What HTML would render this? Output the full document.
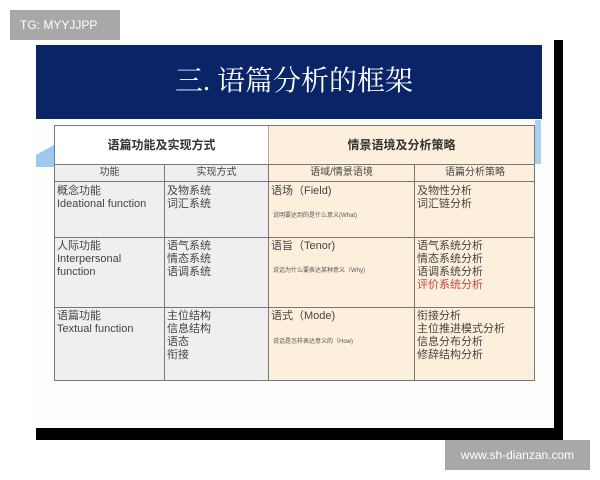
<!DOCTYPE html>
<html><head><meta charset="utf-8"><style>
*{margin:0;padding:0;box-sizing:border-box}
body{width:600px;height:480px;background:#fff;position:relative;overflow:hidden;font-family:"Liberation Sans","Noto Sans CJK SC",sans-serif}
.a{position:absolute}
.c{position:absolute;font-size:11px;line-height:13px;color:#444;padding:2px 2px}
.s{font-size:6px;line-height:8px;color:#555}
</style></head><body>
<div class="a" style="left:10px;top:10px;width:110px;height:30px;background:#a8a8a8;color:#fff;font-size:12px;line-height:30px;padding-left:10px">TG: MYYJJPP</div>
<div class="a" style="left:36px;top:40px;width:518px;height:388px;background:#fdfdfc"></div>
<div class="a" style="left:554px;top:40px;width:9px;height:400px;background:#000"></div>
<div class="a" style="left:36px;top:428px;width:527px;height:12px;background:#000"></div>
<div class="a" style="left:36px;top:45px;width:506px;height:74px;background:#0a2468"></div>
<div class="a" style="left:36px;top:45px;width:506px;height:74px;color:#fff;font-family:'Liberation Serif','Noto Serif CJK SC',serif;font-size:28px;text-align:center;line-height:74px;padding-left:10px">三. 语篇分析的框架</div>
<div class="a" style="left:535px;top:120px;width:6px;height:44px;background:#a9d2f0"></div>
<div class="a" style="left:36px;top:145px;width:18px;height:22px;background:#9cc9ec;clip-path:polygon(0 45%,100% 0,100% 100%,0 100%)"></div>
<div class="a" style="left:54px;top:125px;width:481px;height:256px;border:1px solid #777">
</div>
<div class="a" style="left:55px;top:126px;width:213px;height:38px;background:#fff;font-size:12px;font-weight:bold;color:#333;text-align:center;line-height:38px">语篇功能及实现方式</div>
<div class="a" style="left:268px;top:126px;width:266px;height:38px;background:#fcefdc;font-size:12px;font-weight:bold;color:#333;text-align:center;line-height:38px;border-left:1px solid #aaa">情景语境及分析策略</div>
<div class="a" style="left:55px;top:164px;width:213px;height:216px;background:#efefef"></div>
<div class="a" style="left:268px;top:164px;width:266px;height:216px;background:#fcefdc"></div>
<div class="a" style="left:54px;top:164px;width:481px;height:1px;background:#777"></div>
<div class="a" style="left:54px;top:181px;width:481px;height:1px;background:#777"></div>
<div class="a" style="left:54px;top:237px;width:481px;height:1px;background:#777"></div>
<div class="a" style="left:54px;top:307px;width:481px;height:1px;background:#777"></div>
<div class="a" style="left:164px;top:164px;width:1px;height:217px;background:#777"></div>
<div class="a" style="left:268px;top:164px;width:1px;height:217px;background:#777"></div>
<div class="a" style="left:414px;top:164px;width:1px;height:217px;background:#777"></div>
<div class="c" style="left:55px;top:164px;width:109px;text-align:center;font-size:10px;padding:2px 0">功能</div>
<div class="c" style="left:165px;top:164px;width:103px;text-align:center;font-size:10px;padding:2px 0">实现方式</div>
<div class="c" style="left:269px;top:164px;width:145px;text-align:center;font-size:10px;padding:2px 0">语域/情景语境</div>
<div class="c" style="left:415px;top:164px;width:120px;text-align:center;font-size:10px;padding:2px 0">语篇分析策略</div>
<div class="c" style="left:55px;top:183px">概念功能<br>Ideational function</div>
<div class="c" style="left:165px;top:183px">及物系统<br>词汇系统</div>
<div class="c" style="left:269px;top:183px">语场（Field)</div>
<div class="c s" style="left:271px;top:210px">说明要达到的是什么意义(What)</div>
<div class="c" style="left:415px;top:183px">及物性分析<br>词汇链分析</div>
<div class="c" style="left:55px;top:238px">人际功能<br>Interpersonal<br>function</div>
<div class="c" style="left:165px;top:238px">语气系统<br>情态系统<br>语调系统</div>
<div class="c" style="left:269px;top:238px">语旨（Tenor)</div>
<div class="c s" style="left:271px;top:265px">说话为什么要表达某种意义（Why)</div>
<div class="c" style="left:415px;top:238px">语气系统分析<br>情态系统分析<br>语调系统分析<br><span style="color:#c44">评价系统分析</span></div>
<div class="c" style="left:55px;top:308px">语篇功能<br>Textual function</div>
<div class="c" style="left:165px;top:308px">主位结构<br>信息结构<br>语态<br>衔接</div>
<div class="c" style="left:269px;top:308px">语式（Mode)</div>
<div class="c s" style="left:271px;top:336px">说话是怎样表达意义的（How)</div>
<div class="c" style="left:415px;top:308px">衔接分析<br>主位推进模式分析<br>信息分布分析<br>修辞结构分析</div>
<div class="a" style="left:445px;top:440px;width:145px;height:30px;background:#a8a8a8;color:#fff;font-size:12px;line-height:30px;text-align:center">www.sh-dianzan.com</div>
</body></html>
